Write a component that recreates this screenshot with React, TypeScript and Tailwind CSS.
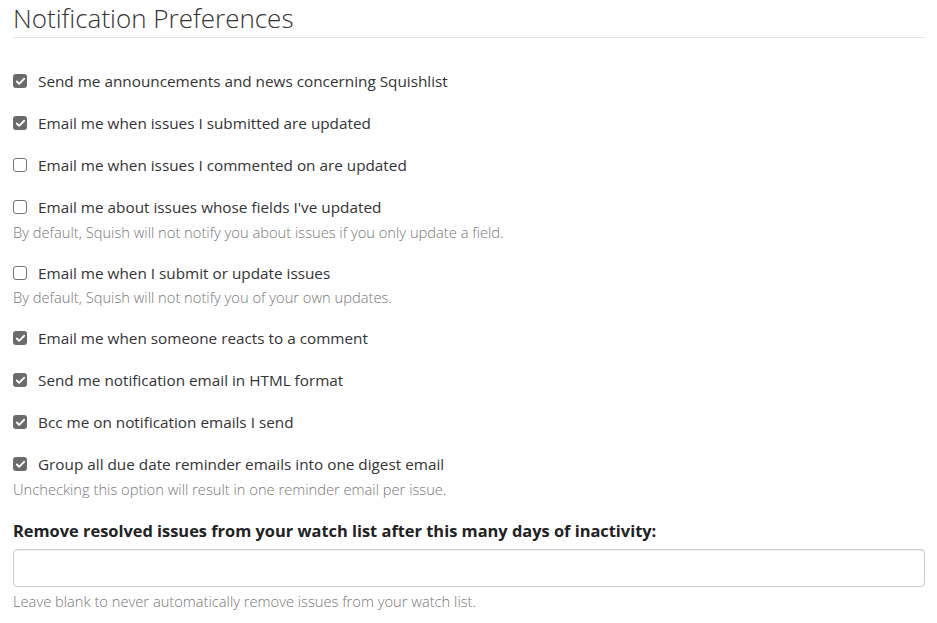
import { Check } from "lucide-react";

type Pref = {
  label: string;
  checked: boolean;
  help?: string;
};

const prefs: Pref[] = [
  { label: "Send me announcements and news concerning Squishlist", checked: true },
  { label: "Email me when issues I submitted are updated", checked: true },
  { label: "Email me when issues I commented on are updated", checked: false },
  {
    label: "Email me about issues whose fields I've updated",
    checked: false,
    help: "By default, Squish will not notify you about issues if you only update a field.",
  },
  {
    label: "Email me when I submit or update issues",
    checked: false,
    help: "By default, Squish will not notify you of your own updates.",
  },
  { label: "Email me when someone reacts to a comment", checked: true },
  { label: "Send me notification email in HTML format", checked: true },
  { label: "Bcc me on notification emails I send", checked: true },
  {
    label: "Group all due date reminder emails into one digest email",
    checked: true,
    help: "Unchecking this option will result in one reminder email per issue.",
  },
];

const Box = ({ checked }: { checked: boolean }) =>
  checked ? (
    <span className="flex h-[14px] w-[14px] shrink-0 items-center justify-center rounded-[3px] bg-[#6b6b6b]">
      <Check className="h-[11px] w-[11px] text-white" strokeWidth={4} />
    </span>
  ) : (
    <span className="h-[14px] w-[14px] shrink-0 rounded-[3px] border border-[#767676] bg-white" />
  );

const App = () => (
  <div className="min-h-screen bg-white px-[13px] pt-px font-['Open_Sans',sans-serif] text-[#333]">
    <h1 className="w-[912px] border-b border-[#e5e5e5] pb-[1px] text-[26px] font-light leading-[35px] text-[#333]">
      Notification Preferences
    </h1>

    <div className="mt-8 flex flex-col gap-5">
      {prefs.map((p) => (
        <div key={p.label}>
          <label className="flex h-[22px] items-center gap-[11px] text-[15.3px] leading-[22px]">
            <Box checked={p.checked} />
            <span>{p.label}</span>
          </label>
          {p.help && (
            <p className="mt-[3.5px] text-[14.7px] font-light leading-[20px] text-[#777]">{p.help}</p>
          )}
        </div>
      ))}

      <div>
        <label className="block text-[16.4px] font-bold leading-[24px] text-[#222]">
          Remove resolved issues from your watch list after this many days of inactivity:
        </label>
        <input
          type="text"
          className="mt-[6px] block h-[38px] w-[912px] rounded-[4px] border border-[#ccc] bg-white px-3 shadow-[inset_0_1px_1px_rgba(0,0,0,0.075)] outline-none"
        />
        <p className="mt-1 text-[14.7px] font-light leading-[20px] text-[#777]">
          Leave blank to never automatically remove issues from your watch list.
        </p>
      </div>
    </div>
  </div>
);

export default App;
